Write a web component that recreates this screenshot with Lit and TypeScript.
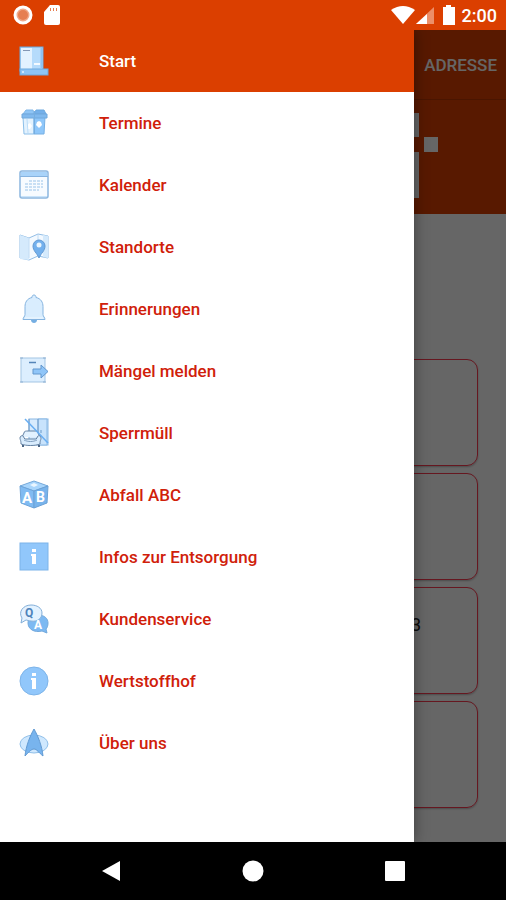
import { LitElement, html, css, svg, type TemplateResult } from "lit";
import { customElement, property, state } from "lit/decorators.js";
import { classMap } from "lit/directives/class-map.js";

interface Entry {
  id: string;
  label: string;
}

const ENTRIES: Entry[] = [
  { id: "start", label: "Start" },
  { id: "termine", label: "Termine" },
  { id: "kalender", label: "Kalender" },
  { id: "standorte", label: "Standorte" },
  { id: "erinnerungen", label: "Erinnerungen" },
  { id: "maengel", label: "Mängel melden" },
  { id: "sperrmuell", label: "Sperrmüll" },
  { id: "abc", label: "Abfall ABC" },
  { id: "infos", label: "Infos zur Entsorgung" },
  { id: "service", label: "Kundenservice" },
  { id: "wertstoffhof", label: "Wertstoffhof" },
  { id: "ueber", label: "Über uns" },
];

const ICONS: Record<string, TemplateResult> = {
  start: svg`
    <rect x="1" y="1" width="23" height="24" fill="#b5dbfb" stroke="#6ea9dc"/>
    <rect x="2" y="2" width="11" height="22" fill="#e3f2ff"/>
    <path d="M4 4.500h7" stroke="#8497b5"/>
    <path d="M22.500 2v20" stroke="#8dc2f2" stroke-width="2"/>
    <rect x="15" y="17" width="6" height="2" fill="#f4faff"/>
    <rect x="1" y="23" width="28" height="6" fill="#8ec4f4" stroke="#6fa9dd"/>
    <circle cx="4" cy="26" r="1" fill="#e3f2ff"/>`,
  termine: svg`
    <path d="M4 6l3-4h7l1 4z" fill="#8fc5f6" stroke="#7eb5e6"/>
    <path d="M15 6l2-4h8l2 4z" fill="#74b0ea" stroke="#6da8de"/>
    <path d="M4 9h11v17H5z" fill="#e3f2fe" stroke="#8cbfe9"/>
    <path d="M15 9h11l-1 17H15z" fill="#8fc7fa" stroke="#76b0e4"/>
    <path d="M3 6h25v4H3z" fill="#80b9ee" stroke="#70a8dc"/>
    <path d="M15.500 3v23" stroke="#76aee0"/>
    <path d="M8 17l3-2 2 3-2 3H8z" fill="#fff"/>
    <path d="M18 14l2-1 2 1 1 3-3 3-3-3z" fill="#fff"/>
    <path d="M8 11l1 14" stroke="#bbddf9"/>`,
  kalender: svg`
    <rect x="1" y="1" width="28" height="27" rx="2" fill="#f7fbff" stroke="#8cb6df" stroke-width="1.500"/>
    <path d="M2 2h26v4H2z" fill="#a9d3f9"/>
    <path d="M1 6.500h28" stroke="#86b3df"/>
    <path d="M10 11h14M6 14h18M6 17h18M6 20h14" stroke="#c8dff4" stroke-width="2" stroke-dasharray="3 1"/>
    <path d="M2 26.500h26" stroke="#c9e4fb"/>`,
  standorte: svg`
    <path d="M1 3l9 3 9-4 10 2v22l-10-2-9 4-9-2z" fill="#f3f9ff" stroke="#93bee6"/>
    <path d="M1 3l9 3v22l-9-1z" fill="#d5eafc"/>
    <path d="M24 3l5 1v22l-5-1z" fill="#d5eafc"/>
    <path d="M10 6v20M19 3v6" stroke="#c2ddf5"/>
    <path d="M20 26c-2-5-6-7-6-12a6 6 0 0 1 12 0c0 5-4 7-6 12z" fill="#73b0ed" stroke="#6199d3"/>
    <circle cx="20" cy="13" r="2.500" fill="#e9f5ff"/>`,
  erinnerungen: svg`
    <path d="M12 26h6c0 4-6 4-6 0z" fill="#75aee2"/>
    <path d="M15 1c1.500 0 2 1 2 2.500 5 1 7 5 7 9v8c0 2 2 3 2 5H4c0-2 2-3 2-5v-8c0-4 2-8 7-9C13 2 13.500 1 15 1z" fill="#d9edfe" stroke="#85b4e0"/>
    <path d="M6 24h18" stroke="#eff8ff"/>`,
  maengel: svg`
    <rect x="2" y="2" width="24" height="24" fill="#dceefe" stroke="#a3c5e4"/>
    <path d="M1 2h3M1 26h3M24 2h3M24 26h3" stroke="#8fb0d2"/>
    <path d="M10 6.500h7" stroke="#5585b9" stroke-width="1.500"/>
    <path d="M14 13h8V9l7 6.500-7 6.500v-4h-8z" fill="#8fc5f8" stroke="#6397cd"/>`,
  sperrmuell: svg`
    <rect x="10" y="1" width="19" height="26" fill="#d8ebfd" stroke="#8ab8e4"/>
    <path d="M19 1h9v26h-9z" fill="#c8e3fc" stroke="#8ab8e4"/>
    <path d="M10 1v13M19 1v26" stroke="#6f9ac6"/>
    <path d="M22 12v3" stroke="#6b9bca"/>
    <path d="M3 19l2-4c0-2 2-2 4-2h6c3 0 4 0 4 2l2 4" fill="#e3f2ff" stroke="#6582a3"/>
    <path d="M1 20c0-3 4-3 4 0l1 1h11l1-1c0-3 4-3 4 0 0 2-1 2-1 6-5 2-14 2-19 0 0-4-1-4-1-6z" fill="#d9ecfd" stroke="#6582a3"/>
    <path d="M5 22c4 2 9 2 13 0" stroke="#7f9dbd"/>
    <path d="M4 27v2M20 27v2" stroke="#4c6685" stroke-width="2"/>
    <path d="M6 1l23 24" stroke="#69aef2" stroke-width="1.500"/>`,
  abc: svg`
    <path d="M15 1l14 5-14 5L1 6z" fill="#a8d5fc" stroke="#75a9da"/>
    <path d="M1 6l14 5v17L2 23z" fill="#80bbf2" stroke="#6da4d9"/>
    <path d="M29 6l-14 5v17l13-5z" fill="#78b4ec" stroke="#6ba1d6"/>
    <path d="M11 5l4-2 4 2-4 2z" fill="#eaf6ff"/>
    <text class="glyph" x="3" y="23" font-size="15">A</text>
    <text class="glyph" x="17" y="22" font-size="14">B</text>`,
  infos: svg`
    <rect x="1" y="1" width="28" height="27" fill="#91c7fb" stroke="#7db4e9"/>
    <path d="M13 7h4v3h-4zM12 12h5v10h-4v-8h-1z" fill="#fff"/>`,
  service: svg`
    <path d="M19 11c7 0 10 4 10 8 0 3-1 5-2 6l1 4-5-2c-8 2-14-2-14-8 0-5 4-8 10-8z" fill="#7db9f2" stroke="#73a9dc"/>
    <path d="M12 1c6 0 11 3 11 8 0 6-5 9-11 8-2 0-4-1-5-1l-5 3 1-5C-1 8 4 1 12 1z" fill="#e3f2ff" stroke="#83afd9"/>
    <text class="glyph dark" x="6" y="13" font-size="12">Q</text>
    <text class="glyph" x="15" y="25" font-size="12">A</text>`,
  wertstoffhof: svg`
    <circle cx="15" cy="15" r="14" fill="#91c7fb" stroke="#7db4e9"/>
    <path d="M13 7h4v3h-4zM12 12h5v11h-4v-9h-1z" fill="#fff"/>`,
  ueber: svg`
    <ellipse cx="15" cy="16" rx="14" ry="9" fill="#cfe8fe" stroke="#8fbfe9"/>
    <path d="M15 1c4 7 8 17 9 27-4-3-6-7-9-7s-6 4-9 7C7 18 11 8 15 1z" fill="#78b4ee" stroke="#6099d2"/>`,
};

@customElement("status-bar")
export class StatusBar extends LitElement {
  static styles = css`
    :host {
      display: flex;
      align-items: center;
      justify-content: space-between;
      height: 30px;
      padding: 0 9px 0 13px;
      color: #fff;
      background: #db3f00;
      font-size: 18px;
      font-weight: 500;
    }
    .group {
      display: flex;
      align-items: center;
    }
    .left {
      gap: 11px;
    }
    .time {
      margin-left: 5px;
    }
    svg {
      display: block;
    }
  `;

  render() {
    return html`
      <div class="group left">
        <svg width="20" height="20" viewBox="0 0 20 20" aria-hidden="true">
          <circle cx="10" cy="10" r="8" fill="#f0a98a" stroke="#fff" stroke-width="3" />
          <circle cx="10" cy="10" r="5" fill="#e67f52" />
        </svg>
        <svg width="16" height="20" viewBox="0 0 16 20" aria-hidden="true">
          <path d="M6 0h8q2 0 2 2v16q0 2-2 2H2q-2 0-2-2V7z" fill="#fff" />
          <path d="M6 3h1v3H6zM9 3h1v3H9zM12 3h1v3h-1z" fill="#e67f52" />
        </svg>
      </div>
      <div class="group">
        <svg width="66" height="20" viewBox="0 0 66 20" aria-hidden="true">
          <path d="M0 5Q12-3 24 5L12 19z" fill="#fff" />
          <path d="M43 2v17H25z" fill="#ec8f68" />
          <path d="M36 9v10H25z" fill="#fff" />
          <path d="M55 0h5v2h4v18H52V2h3z" fill="#fff" />
        </svg>
        <span class="time">2:00</span>
      </div>
    `;
  }
}

@customElement("home-page")
export class HomePage extends LitElement {
  static styles = css`
    :host {
      display: block;
      background: #fff;
    }
    .bar {
      display: flex;
      align-items: center;
      justify-content: flex-end;
      height: 70px;
      padding: 0 9px;
      background: #db3f00;
      border-bottom: 1px solid #b93500;
      box-sizing: border-box;
    }
    .address {
      padding: 0;
      border: 0;
      background: none;
      color: #fff;
      font: inherit;
      font-size: 17px;
      font-weight: 500;
    }
    .banner {
      display: flex;
      justify-content: flex-end;
      height: 114px;
      padding: 13px 68px 16px;
      background: #db3f00;
      box-sizing: border-box;
    }
    .cards {
      display: grid;
      gap: 7px;
      padding: 145px 28px 32px;
    }
    .card {
      display: flex;
      justify-content: flex-end;
      align-items: flex-start;
      height: 107px;
      padding: 27px 56px;
      border: 1px solid #ff3a50;
      border-radius: 11px;
      box-shadow: 0 1px 2px #bbb;
      box-sizing: border-box;
      color: #222;
      font-size: 18px;
      line-height: 20px;
    }
  `;

  render() {
    return html`
      <header class="bar"><button class="address">ADRESSE</button></header>
      <div class="banner">
        <svg width="34" height="85" viewBox="0 0 34 85" aria-hidden="true">
          <path d="M0 0h15v24H0zM0 39h15v46H0zM20 24h14v15H20z" fill="#fff" />
        </svg>
      </div>
      <div class="cards">
        <section class="card"></section>
        <section class="card"></section>
        <section class="card"><span>3</span></section>
        <section class="card"></section>
      </div>
    `;
  }
}

@customElement("nav-drawer")
export class NavDrawer extends LitElement {
  @property() selected = "start";

  static styles = css`
    :host {
      display: block;
      background: #fff;
    }
    .item {
      display: flex;
      align-items: center;
      gap: 50px;
      height: 62px;
      padding: 0 19px;
      color: #d0200a;
      font-size: 17px;
      font-weight: 500;
      text-decoration: none;
    }
    .item.active {
      background: #db3f00;
      color: #fff;
    }
    .icon {
      flex: none;
      width: 30px;
      height: 30px;
      fill: none;
    }
    .glyph {
      fill: #fff;
      font-weight: 700;
    }
    .glyph.dark {
      fill: #4f83ba;
    }
  `;

  private pick(id: string) {
    this.dispatchEvent(new CustomEvent("pick", { detail: id }));
  }

  render() {
    return html`
      <nav>
        ${ENTRIES.map(
          (e) => html`
            <a
              class=${classMap({ item: true, active: e.id === this.selected })}
              href="#${e.id}"
              @click=${() => this.pick(e.id)}
            >
              <svg class="icon" viewBox="0 0 30 30" aria-hidden="true">${ICONS[e.id]}</svg>
              <span>${e.label}</span>
            </a>
          `
        )}
      </nav>
    `;
  }
}

@customElement("system-nav")
export class SystemNav extends LitElement {
  static styles = css`
    :host {
      display: grid;
      grid-template-columns: repeat(3, 1fr);
      height: 58px;
      padding: 0 40px;
      background: #000;
    }
    button {
      display: grid;
      place-items: center;
      padding: 0;
      border: 0;
      background: none;
    }
    svg {
      display: block;
      fill: #fff;
    }
  `;

  render() {
    return html`
      <button aria-label="Zurück">
        <svg width="20" height="22" viewBox="0 0 20 22"><path d="M19 1v20L1 11z" /></svg>
      </button>
      <button aria-label="Startbildschirm">
        <svg width="22" height="22" viewBox="0 0 22 22"><circle cx="11" cy="11" r="10.500" /></svg>
      </button>
      <button aria-label="Übersicht">
        <svg width="20" height="20" viewBox="0 0 20 20"><rect width="20" height="20" rx="1" /></svg>
      </button>
    `;
  }
}

@customElement("app-root")
export class AppRoot extends LitElement {
  @state() private selected = "start";

  static styles = css`
    :host {
      display: flex;
      flex-direction: column;
      min-height: 100vh;
      font-family: Roboto, "Noto Sans", sans-serif;
    }
    .stage {
      position: relative;
      flex: 1;
      display: grid;
      overflow: hidden;
    }
    .scrim {
      position: absolute;
      inset: 0;
      background: rgba(0, 0, 0, 0.6);
    }
    .drawer {
      position: absolute;
      inset: 0 18% 0 0;
      margin-right: 1px;
      box-shadow: 0 0 14px rgba(0, 0, 0, 0.4);
    }
  `;

  render() {
    return html`
      <status-bar></status-bar>
      <main class="stage">
        <home-page></home-page>
        <div class="scrim"></div>
        <nav-drawer
          class="drawer"
          .selected=${this.selected}
          @pick=${(e: CustomEvent<string>) => (this.selected = e.detail)}
        ></nav-drawer>
      </main>
      <system-nav></system-nav>
    `;
  }
}
